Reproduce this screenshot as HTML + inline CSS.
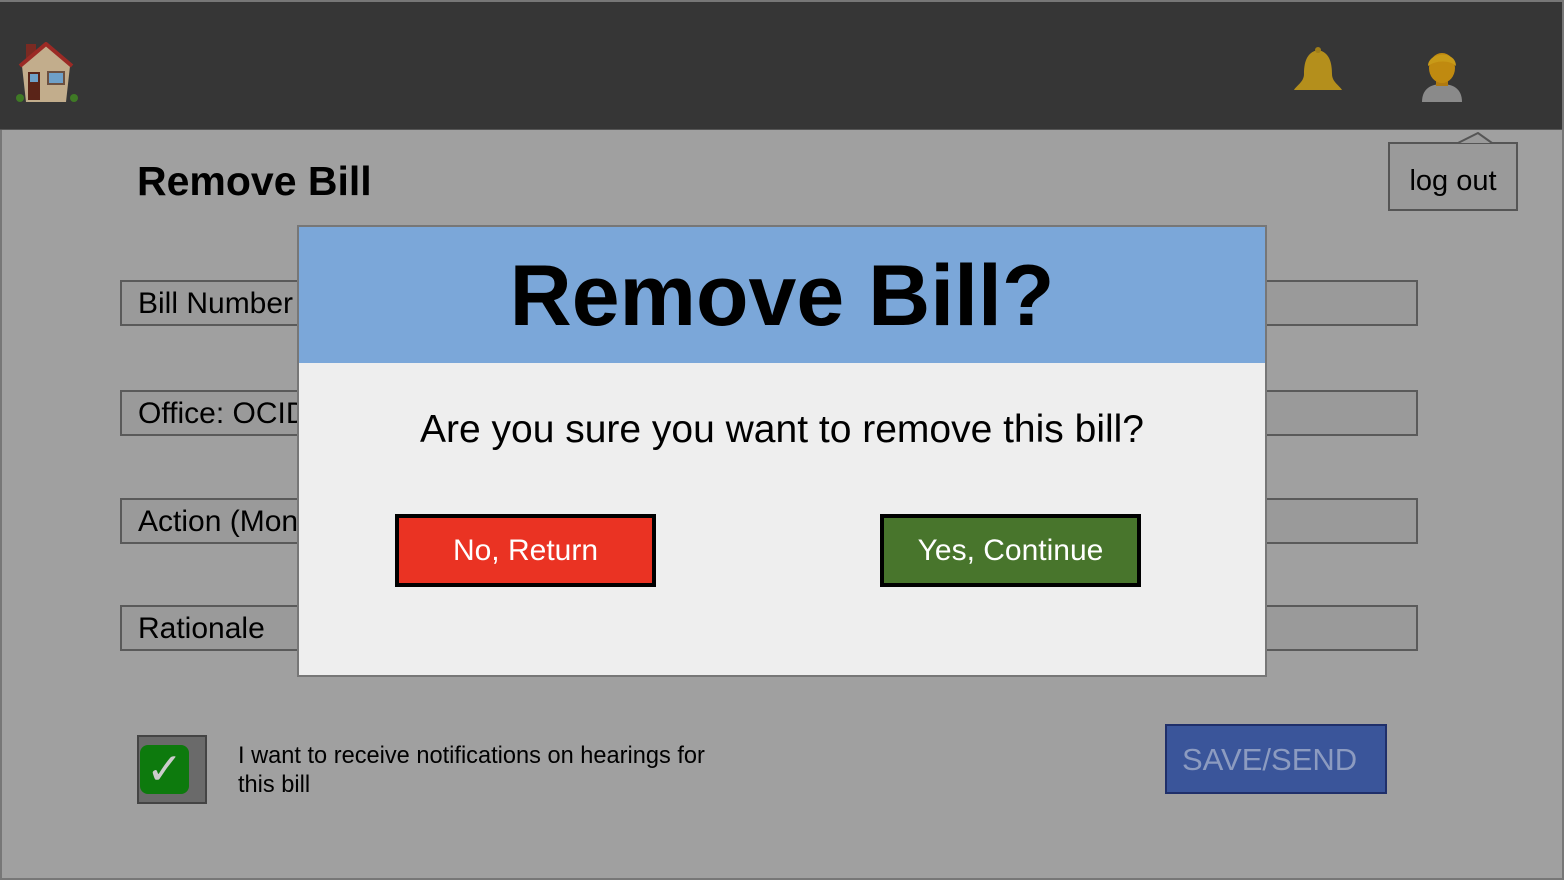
<!DOCTYPE html>
<html><head><style>
body{margin:0;width:1564px;height:880px;background:#a0a0a0;font-family:"Liberation Sans",sans-serif;position:relative;overflow:hidden}
.a{position:absolute}
.f{position:absolute;left:120px;width:1298px;height:46px;border:2px solid #5a5a5a;background:#9a9a9a;box-sizing:border-box;font-size:30px;padding-left:16px;line-height:44px;color:#000}
</style></head><body>
<div class="a" style="left:0;top:0;width:1564px;height:880px;border:2px solid #777;box-sizing:border-box"></div>
<div class="a" style="left:0;top:0;width:1562px;height:130px;background:#363636;border-top:2px solid #777;border-bottom:1px solid #555;box-sizing:border-box"></div>
<svg class="a" style="left:16px;top:42px" width="62" height="62" viewBox="0 0 62 62">
<rect x="10" y="2" width="10" height="14" fill="#7a2a22"/>
<polygon points="6,24 30,2 54,24 50,60 10,60" fill="#c2ad8c"/>
<polyline points="4,24 30,2 56,24" fill="none" stroke="#9b2a25" stroke-width="4"/>
<rect x="12" y="30" width="12" height="28" fill="#5a2418"/><rect x="14" y="32" width="8" height="8" fill="#6ea0c8"/>
<rect x="32" y="30" width="16" height="12" fill="#6ea0c8" stroke="#6b5040" stroke-width="2"/>
<circle cx="4" cy="56" r="4" fill="#3f7a25"/><circle cx="58" cy="56" r="4" fill="#3f7a25"/></svg>
<svg class="a" style="left:1290px;top:46px" width="56" height="56" viewBox="0 0 56 56">
<circle cx="29" cy="32" r="6" fill="#8a6a10"/>
<path d="M28 4 C16 6 14 18 14 28 C14 36 6 40 4 44 L52 44 C50 40 42 36 42 28 C42 18 40 6 28 4Z" fill="#b48f1c"/>
<circle cx="28" cy="4" r="3" fill="#a07e18"/></svg>
<svg class="a" style="left:1420px;top:48px" width="44" height="54" viewBox="0 0 44 54">
<path d="M2 54 C2 40 12 36 22 36 C32 36 42 40 42 54Z" fill="#8a8a8a"/>
<rect x="16" y="28" width="12" height="10" fill="#b07a10"/>
<ellipse cx="22" cy="20" rx="13" ry="15" fill="#c08a10"/>
<path d="M8 18 C8 4 36 2 36 18 C30 12 16 12 8 18Z" fill="#c89a18"/></svg>
<div class="a" style="left:1388px;top:142px;width:130px;height:69px;border:2px solid #555;box-sizing:border-box;background:#9a9a9a;font-size:29px;line-height:74px;text-align:center">log out</div>
<svg class="a" style="left:1458px;top:132px" width="40" height="12"><polyline points="0,11 20,1 34,11" fill="#9a9a9a" stroke="#555" stroke-width="2"/></svg>
<div class="a" style="left:137px;top:158px;font-size:41px;font-weight:bold">Remove Bill</div>
<div class="f" style="top:280px">Bill Number</div>
<div class="f" style="top:390px">Office: OCID</div>
<div class="f" style="top:498px">Action (Monitor)</div>
<div class="f" style="top:605px">Rationale</div>
<div class="a" style="left:137px;top:735px;width:70px;height:69px;background:#6a6a6a;border:2px solid #444;box-sizing:border-box"></div>
<div class="a" style="left:140px;top:745px;width:49px;height:49px;background:#0d7a0d;border-radius:8px;color:#ccc;font-size:44px;line-height:50px;text-align:center">✓</div>
<div class="a" style="left:238px;top:742px;font-size:23.6px;line-height:29px">I want to receive notifications on hearings for<br>this bill</div>
<div class="a" style="left:1165px;top:724px;width:222px;height:70px;background:#3a559a;border:2px solid #1f2f6a;box-sizing:border-box;color:#8c9bc0;font-size:31px;line-height:68px;padding-left:15px">SAVE/SEND</div>
<div class="a" style="left:297px;top:225px;width:970px;height:452px;background:#eeeeee;border:2px solid #777;box-sizing:border-box">
<div style="height:136px;background:#7ba7d9;text-align:center;font-weight:bold;font-size:86px;line-height:138px">Remove Bill?</div>
<div style="text-align:center;font-size:39px;margin-top:45px">Are you sure you want to remove this bill?</div>
</div>
<div class="a" style="left:395px;top:514px;width:261px;height:73px;background:#ea3323;border:4px solid #000;box-sizing:border-box;color:#fff;font-size:30px;line-height:66px;text-align:center">No, Return</div>
<div class="a" style="left:880px;top:514px;width:261px;height:73px;background:#48752c;border:4px solid #000;box-sizing:border-box;color:#fff;font-size:30px;line-height:66px;text-align:center">Yes, Continue</div>
</body></html>
